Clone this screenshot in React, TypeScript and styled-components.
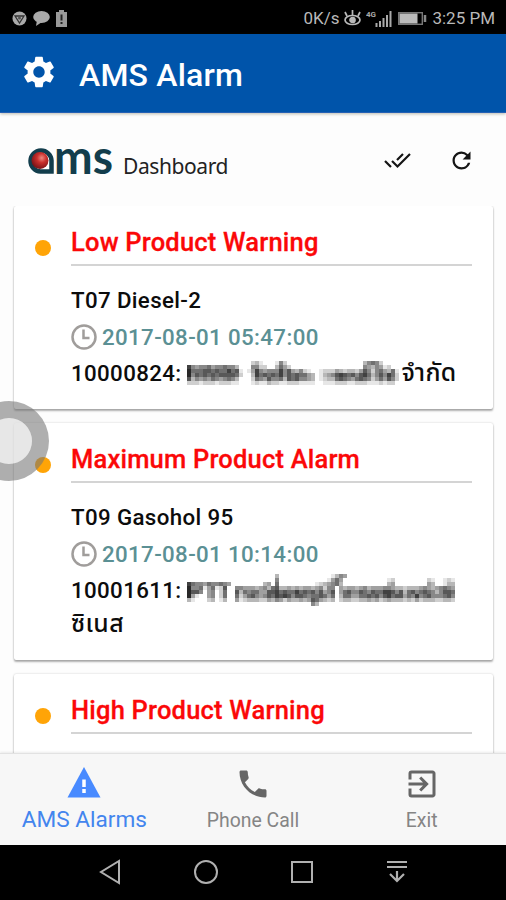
import React from "react";
import styled, { createGlobalStyle } from "styled-components";
import { MdSettings, MdRefresh, MdPhone, MdExitToApp } from "react-icons/md";

const GlobalStyle = createGlobalStyle`
  * { box-sizing: border-box; }
  body { margin: 0; font-family: Roboto, "Noto Sans Thai", "Noto Sans", "Liberation Sans", sans-serif; background: #fff; }
  svg { display: block; flex: none; }
`;

const Screen = styled.main`
  width: 506px;
  height: 900px;
  display: flex;
  flex-direction: column;
  overflow: hidden;
  position: relative;
  background: #fdfdfd;
`;

const StatusBar = styled.div`
  height: 34px;
  flex: none;
  display: flex;
  justify-content: space-between;
  align-items: center;
  padding: 2px 11px 0 12px;
  background: #000;
  color: #b9b9b9;
  font-size: 17px;
`;

const StatusGroup = styled.div<{ $gap: number }>`
  display: flex;
  align-items: center;
  gap: ${(p) => p.$gap}px;
`;

const StatusText = styled.span`
  white-space: nowrap;
`;

const AppBar = styled.header`
  height: 79px;
  flex: none;
  display: flex;
  align-items: center;
  padding: 4px 0 0 20px;
  gap: 21px;
  color: #fff;
  background: #0054aa;
  border-bottom: 1px solid #2560b4;
  box-shadow: 0 1px 3px rgba(60, 60, 30, 0.35);
  z-index: 1;
`;

const SettingsIcon = styled(MdSettings)`
  margin-top: -7px;
`;

const Title = styled.h1`
  margin: 0;
  font-size: 32px;
  line-height: 40px;
  font-weight: 500;
  letter-spacing: 0.2px;
`;

const Dashboard = styled.div`
  height: 93px;
  flex: none;
  display: flex;
  align-items: center;
  padding: 2px 31px 0 27px;
`;

const DashboardLabel = styled.span`
  flex: 1;
  margin: 10px 0 0 8px;
  font-family: "Noto Sans", sans-serif;
  font-size: 21px;
  line-height: 28px;
  letter-spacing: -0.4px;
  color: #222;
`;

const Actions = styled.div`
  display: flex;
  align-items: center;
  gap: 36px;
`;

const Feed = styled.section`
  flex: 1;
  min-height: 0;
  overflow: hidden;
  display: flex;
  flex-direction: column;
  gap: 14px;
  padding: 0 13px 0 14px;
`;

const Card = styled.article<{ $height: number }>`
  flex: none;
  height: ${(p) => p.$height}px;
  display: grid;
  grid-template-columns: 57px 1fr;
  padding-right: 21px;
  background: #fff;
  border-radius: 2px;
  box-shadow: 0 2px 2px rgba(0, 0, 0, 0.3), 0 0 2px rgba(0, 0, 0, 0.22);
`;

const Dot = styled.i`
  width: 16px;
  height: 16px;
  margin: 34px 0 0 21px;
  border-radius: 50%;
  background: #ffa407;
`;

const CardTitle = styled.h2`
  margin: 0;
  height: 60px;
  padding-top: 20px;
  border-bottom: 2px solid #d4d4d4;
  font-size: 25.5px;
  line-height: 32px;
  font-weight: 500;
  letter-spacing: 0.2px;
  color: #fb0808;
  white-space: nowrap;
  -webkit-text-stroke: 0.3px #fb0808;
`;

const Line = styled.p<{ $top?: number }>`
  margin: ${(p) => p.$top ?? 0}px 0 0;
  display: flex;
  align-items: center;
  height: 36.5px;
  font-size: 22.3px;
  line-height: 36px;
  font-weight: 500;
  letter-spacing: 0.36px;
  color: #0c0c0c;
  white-space: nowrap;
`;

const Stamp = styled(Line)`
  gap: 5px;
  color: #5b9094;
`;

const Thai = styled.span<{ $indent?: number }>`
  font-size: 24.8px;
  margin-left: ${(p) => p.$indent ?? 0}px;
`;

const TabBar = styled.nav`
  height: 92px;
  flex: none;
  display: grid;
  grid-template-columns: repeat(3, 1fr);
  background: #f7f7f7;
  border-top: 1px solid #e2e2e2;
  box-shadow: 0 -1px 2px rgba(0, 0, 0, 0.08);
  z-index: 1;
`;

const Tab = styled.div`
  display: flex;
  flex-direction: column;
  align-items: center;
  padding-top: 12px;
  color: #666;
`;

const TabLabel = styled.span<{ $active?: boolean }>`
  margin-top: ${(p) => (p.$active ? 7 : 6)}px;
  font-size: ${(p) => (p.$active ? 22.6 : 19.4)}px;
  line-height: 26px;
  color: ${(p) => (p.$active ? "#4385ee" : "#858585")};
`;

const NavBar = styled.div`
  height: 55px;
  flex: none;
  display: flex;
  align-items: center;
  justify-content: space-between;
  padding: 0 99px 1px 97px;
  background: #000;
`;

const AssistBall = styled.div`
  position: absolute;
  left: -31px;
  top: 401px;
  width: 80px;
  height: 80px;
  border: 17px solid rgba(118, 118, 118, 0.58);
  border-radius: 50%;
  background: rgba(225, 225, 225, 0.8);
  background-clip: padding-box;
  z-index: 2;
`;

const LogoMark = styled.svg`
  overflow: visible;
`;

const Logo = () => (
  <LogoMark width="88" height="80" viewBox="0 -25 88 80">
    <defs>
      <radialGradient id="ball" cx="0.6" cy="0.35" r="0.7">
        <stop offset="0" stopColor="#ee8a80" />
        <stop offset="0.4" stopColor="#c92f2c" />
        <stop offset="1" stopColor="#6f1015" />
      </radialGradient>
    </defs>
    <path d="M24.500 25.500H13.500A10.500 10.500 0 1 1 24.500 14.500Z" fill="#fff" stroke="#123d4c" strokeWidth="4.500" />
    <circle cx="13" cy="14.500" r="8.500" fill="url(#ball)" />
    <text
      x="27"
      y="27.500"
      textLength="59"
      lengthAdjust="spacingAndGlyphs"
      fontFamily="Lato"
      fontWeight="700"
      fontSize="47"
      fill="#123d4c"
    >
      ms
    </text>
  </LogoMark>
);

const DoubleCheck = () => (
  <svg width="28" height="18" viewBox="0 0 28 18" fill="none" stroke="#151515" strokeWidth="2.200">
    <path d="M1 9l6 6M8 9l5.500 5.500L26 2M13 8l6-6" />
  </svg>
);

const Clock = () => (
  <svg width="26" height="26" viewBox="0 0 26 26" fill="none" stroke="#a09d9b" strokeWidth="2.500">
    <circle cx="13" cy="13" r="11.500" />
    <path d="M12.500 5.500V14H18.500" />
  </svg>
);

/* Each digit is the darkness (0-9) of one 4px block of a masked name. */
const Mosaic = ({ rows }: { rows: string[] }) => (
  <svg width={rows[0].length * 4} height={rows.length * 4} shapeRendering="crispEdges">
    {rows.flatMap((row, y) =>
      [...row].map((c, x) =>
        c === "0" ? null : (
          <rect key={`${x}-${y}`} x={x * 4} y={y * 4} width="4" height="4" fill="#111" opacity={Number(c) / 10} />
        )
      )
    )}
  </svg>
);

const MASK_A = [
  "00000000000000" + "00" + "2310001520000000" + "00" + "000000000035652000" + "0",
  "85455645565530" + "00" + "5522003642000000" + "00" + "000000000054354120" + "0",
  "96667767668671" + "01" + "4854555857435210" + "01" + "222432332475256436" + "1",
  "95767676777762" + "00" + "3867676857676643" + "01" + "345787675786357586" + "2",
  "73545465456530" + "00" + "2654755637675543" + "01" + "233676546765246475" + "2",
  "22212221222110" + "00" + "1211322112221111" + "00" + "111222112221112122" + "0",
];

const MASK_B = [
  "000000000000" + "0000000000" + "30000000" + "0000001354" + "0000000000" + "0000000000" + "0000000",
  "000000000000" + "0000000000" + "50000000" + "0000014640" + "0000000000" + "1200000000" + "2100121",
  "865546556540" + "0000000340" + "60000000" + "0012345630" + "0000000000" + "3400000000" + "4300133",
  "955614612700" + "5544434536" + "73343434" + "4345255043" + "4434534445" + "5433233345" + "4345654",
  "977504502600" + "7365664477" + "86766867" + "6757457046" + "7557657668" + "8757367567" + "6535776",
  "941004502600" + "6246754576" + "87875776" + "5667646036" + "6446676757" + "8677465856" + "7555675",
  "310002301300" + "4123332243" + "54243343" + "4764323023" + "3223343423" + "4333232423" + "3322332",
  "000000000000" + "0000000000" + "00000000" + "0530000000" + "0000000000" + "0000000000" + "0000000",
];

export default function App() {
  return (
    <Screen>
      <GlobalStyle />
      <StatusBar>
        <StatusGroup $gap={6}>
          <svg width="15" height="15" viewBox="0 0 15 15"><circle cx="7.500" cy="7.500" r="7" fill="#aaa" /><path d="M3 5h9L7.500 12Z" fill="none" stroke="#333" strokeWidth="1.300" /><circle cx="7.500" cy="7" r="1.500" fill="#555" /></svg>
          <svg width="17" height="16" viewBox="0 0 17 16"><ellipse cx="8.500" cy="7" rx="8.300" ry="6" fill="#aaa" /><path d="M4 10L3 16L9 12Z" fill="#aaa" /></svg>
          <svg width="11" height="17" viewBox="0 0 11 17"><path d="M3 0h5v2h3v15H0V2h3Z" fill="#999" /><path d="M5.500 4.500v6M5.500 12v2" stroke="#222" strokeWidth="2" /></svg>
        </StatusGroup>
        <StatusGroup $gap={5}>
          <StatusText>0K/s</StatusText>
          <svg width="17" height="16" viewBox="0 0 17 16" fill="none" stroke="#b9b9b9" strokeWidth="1.700"><ellipse cx="8.500" cy="10" rx="7.500" ry="4.500" /><circle cx="8.500" cy="10" r="2.500" fill="#b9b9b9" /><path d="M8.500 5V0M3 6L1 2M14 6L16 2" /></svg>
          <svg width="27" height="17" viewBox="0 0 27 17" fill="none" stroke="#aaa" strokeWidth="2"><path d="M10.500 17v-4M14 17v-6M17.500 17V8M21 17V5M24.500 17V1" /><text x="0" y="7" fontSize="8" fontWeight="700" fill="#aaa" stroke="none">4G</text></svg>
          <svg width="29" height="13" viewBox="0 0 29 13"><rect x="0.700" y="0.700" width="23.600" height="11.600" fill="none" stroke="#777" strokeWidth="1.400" /><rect x="1.500" y="1.500" width="18" height="10" fill="#bbb" /><path d="M27 3v7" stroke="#888" strokeWidth="2.500" /></svg>
          <StatusText>3:25 PM</StatusText>
        </StatusGroup>
      </StatusBar>
      <AppBar>
        <SettingsIcon size={38} />
        <Title>AMS Alarm</Title>
      </AppBar>
      <Dashboard>
        <Logo />
        <DashboardLabel>Dashboard</DashboardLabel>
        <Actions>
          <DoubleCheck />
          <MdRefresh size={27} color="#151515" />
        </Actions>
      </Dashboard>
      <Feed>
        <Card $height={203}>
          <Dot />
          <div>
            <CardTitle>Low Product Warning</CardTitle>
            <Line $top={16}>T07 Diesel-2</Line>
            <Stamp><Clock />2017-08-01 05:47:00</Stamp>
            <Line>10000824:&nbsp;<Mosaic rows={MASK_A} /><Thai $indent={2}>จำกัด</Thai></Line>
          </div>
        </Card>
        <Card $height={237}>
          <Dot />
          <div>
            <CardTitle>Maximum Product Alarm</CardTitle>
            <Line $top={16}>T09 Gasohol 95</Line>
            <Stamp><Clock />2017-08-01 10:14:00</Stamp>
            <Line>10001611:&nbsp;<Mosaic rows={MASK_B} /></Line>
            <Line $top={-3}><Thai>ซิเนส</Thai></Line>
          </div>
        </Card>
        <Card $height={203}>
          <Dot />
          <div>
            <CardTitle>High Product Warning</CardTitle>
          </div>
        </Card>
      </Feed>
      <TabBar>
        <Tab>
          <svg width="34" height="34" viewBox="0 0 34 34"><path d="M17 1L33.500 31.500H0.500Z" fill="#488aff" /><path d="M17 13.500v7.500M17 23v4" stroke="#fff" strokeWidth="3.500" /></svg>
          <TabLabel $active>AMS Alarms</TabLabel>
        </Tab>
        <Tab>
          <MdPhone size={36} />
          <TabLabel>Phone Call</TabLabel>
        </Tab>
        <Tab>
          <MdExitToApp size={36} />
          <TabLabel>Exit</TabLabel>
        </Tab>
      </TabBar>
      <NavBar>
        <svg width="25" height="28" viewBox="0 0 25 28" fill="none" stroke="#b0b0b0" strokeWidth="2"><path d="M22 3V25L4 14Z" /></svg>
        <svg width="26" height="26" viewBox="0 0 26 26" fill="none" stroke="#b0b0b0" strokeWidth="2"><circle cx="12" cy="13" r="11" /></svg>
        <svg width="24" height="24" viewBox="0 0 24 24" fill="none" stroke="#b0b0b0" strokeWidth="2"><rect x="1" y="2" width="20" height="20" /></svg>
        <svg width="20" height="24" viewBox="0 0 20 24" fill="none" stroke="#b0b0b0" strokeWidth="2.200"><path d="M0 2H20M0 7H20M10 11V21M3 14l7 7 7-7" /></svg>
      </NavBar>
      <AssistBall />
    </Screen>
  );
}
